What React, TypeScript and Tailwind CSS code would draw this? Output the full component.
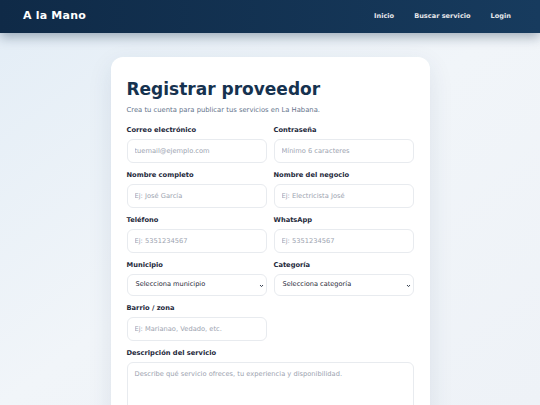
import React from "react";

const Field = ({ label, placeholder }: { label: string; placeholder: string }) => (
  <div className="flex flex-col">
    <label className="h-[10px] leading-[10px] text-[6.7px] font-bold text-[#1e293b] mb-[4px]">{label}</label>
    <input
      placeholder={placeholder}
      className="h-[24px] w-full rounded-[6px] border border-[#e8ebef] bg-white px-[7px] text-[6.7px] text-[#334155] placeholder:text-[#9ca3af] outline-none"
    />
  </div>
);

const SelectField = ({ label, value }: { label: string; value: string }) => (
  <div className="flex flex-col">
    <label className="h-[10px] leading-[10px] text-[6.7px] font-bold text-[#1e293b] mb-[4px]">{label}</label>
    <div className="relative h-[22px] w-full rounded-[6px] border border-[#e8ebef] bg-white flex items-center pl-[8px] text-[6.6px] text-[#1f2937]">
      <span>{value}</span>
      <svg className="absolute right-[2px] top-[9px]" width="5" height="4" viewBox="0 0 5 4">
        <path d="M1 1 L2.5 2.6 L4 1" stroke="#374151" strokeWidth="1" fill="none" />
      </svg>
    </div>
  </div>
);

export default function App() {
  return (
    <div
      className="min-h-[405px] h-[405px] overflow-hidden bg-gradient-to-br from-[#e3edf6] via-[#f1f5f9] to-[#eef2f7]"
      style={{ fontFamily: '"DejaVu Sans", Verdana, sans-serif' }}
    >
      <header className="relative z-10 h-[33px] flex items-center justify-between pl-[23px] pr-[29px] bg-gradient-to-r from-[#0f2a47] to-[#173b5e] shadow-[0_4px_12px_rgba(15,42,71,0.35)]">
        <span className="text-white font-bold text-[11px] tracking-[0.2px]">A la Mano</span>
        <nav className="flex items-center gap-[20px] text-[6.6px] font-bold text-[#e5e7eb]">
          <span>Inicio</span>
          <span>Buscar servicio</span>
          <span>Login</span>
        </nav>
      </header>
      <main className="flex justify-center pt-[24px]">
        <div className="w-[319px] rounded-[12px] bg-white shadow-[0_8px_24px_rgba(30,58,95,0.10)] px-[16px] pt-[18px] pb-[20px]">
          <h1 className="text-[17px] leading-[28px] font-bold text-[#16324f]">Registrar proveedor</h1>
          <p className="mt-[2px] text-[6.8px] leading-[10px] text-[#64748b]">
            Crea tu cuenta para publicar tus servicios en La Habana.
          </p>
          <div className="mt-[10px] grid grid-cols-2 gap-x-[7px] gap-y-[7px]">
            <Field label="Correo electrónico" placeholder="tuemail@ejemplo.com" />
            <Field label="Contraseña" placeholder="Mínimo 6 caracteres" />
            <Field label="Nombre completo" placeholder="Ej: José García" />
            <Field label="Nombre del negocio" placeholder="Ej: Electricista José" />
            <Field label="Teléfono" placeholder="Ej: 5351234567" />
            <Field label="WhatsApp" placeholder="Ej: 5351234567" />
            <SelectField label="Municipio" value="Selecciona municipio" />
            <SelectField label="Categoría" value="Selecciona categoría" />
            <Field label="Barrio / zona" placeholder="Ej: Marianao, Vedado, etc." />
            <div />
            <div className="col-span-2 flex flex-col">
              <label className="h-[10px] leading-[10px] text-[6.7px] font-bold text-[#1e293b] mb-[4px]">Descripción del servicio</label>
              <textarea
                placeholder="Describe qué servicio ofreces, tu experiencia y disponibilidad."
                className="h-[70px] w-full resize-none rounded-[6px] border border-[#e8ebef] bg-white px-[7px] py-[6px] text-[6.7px] placeholder:text-[#9ca3af] outline-none"
              />
            </div>
          </div>
        </div>
      </main>
    </div>
  );
}
